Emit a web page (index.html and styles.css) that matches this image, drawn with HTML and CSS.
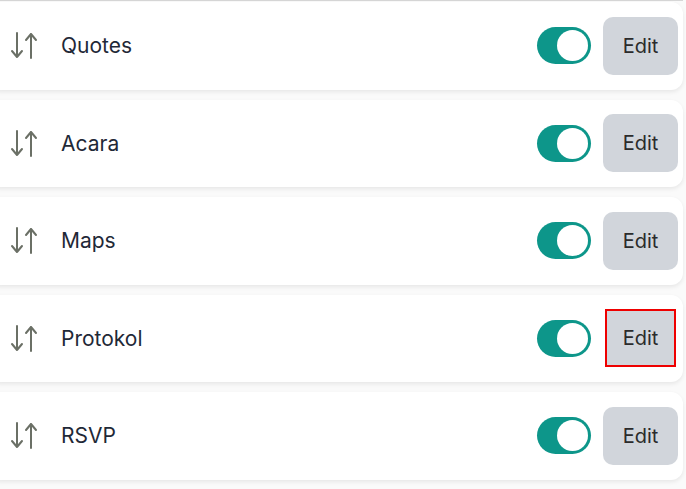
FILE: index.html
```html
<!DOCTYPE html>
<html lang="en">
<head>
    <meta charset="UTF-8">
    <meta name="viewport" content="width=device-width, initial-scale=1.0">
    <title>Sections</title>
    <link rel="stylesheet" href="styles.css">
</head>
<body>

    <div class="section-list">
        <div class="section-card">
            <svg class="sort-icon" viewBox="0 0 28 27" width="28" height="27"><path d="M7 1V25M2 19L7 25L12 19M21 26V2M16 8L21 2L26 8"/></svg>
            <span class="section-name">Quotes</span>
            <label class="toggle"><input type="checkbox" checked><span class="track"></span></label>
            <button class="edit-btn">Edit</button>
        </div>
        <div class="section-card">
            <svg class="sort-icon" viewBox="0 0 28 27" width="28" height="27"><path d="M7 1V25M2 19L7 25L12 19M21 26V2M16 8L21 2L26 8"/></svg>
            <span class="section-name">Acara</span>
            <label class="toggle"><input type="checkbox" checked><span class="track"></span></label>
            <button class="edit-btn">Edit</button>
        </div>
        <div class="section-card">
            <svg class="sort-icon" viewBox="0 0 28 27" width="28" height="27"><path d="M7 1V25M2 19L7 25L12 19M21 26V2M16 8L21 2L26 8"/></svg>
            <span class="section-name">Maps</span>
            <label class="toggle"><input type="checkbox" checked><span class="track"></span></label>
            <button class="edit-btn">Edit</button>
        </div>
        <div class="section-card">
            <svg class="sort-icon" viewBox="0 0 28 27" width="28" height="27"><path d="M7 1V25M2 19L7 25L12 19M21 26V2M16 8L21 2L26 8"/></svg>
            <span class="section-name">Protokol</span>
            <label class="toggle"><input type="checkbox" checked><span class="track"></span></label>
            <button class="edit-btn highlighted">Edit</button>
        </div>
        <div class="section-card">
            <svg class="sort-icon" viewBox="0 0 28 27" width="28" height="27"><path d="M7 1V25M2 19L7 25L12 19M21 26V2M16 8L21 2L26 8"/></svg>
            <span class="section-name">RSVP</span>
            <label class="toggle"><input type="checkbox" checked><span class="track"></span></label>
            <button class="edit-btn">Edit</button>
        </div>
    </div>

</body>
</html>
```

FILE: styles.css
```css
body {
    margin: 0;
    font-family: Inter, "Noto Sans", sans-serif;
    background-color: #fafafa;
}
.section-list {
    border-top: 1px solid #d6d6d6;
    padding-top: 1px;
    margin-left: -12px;
    width: 695px;
}
.section-card {
    display: flex;
    align-items: center;
    height: 87.5px;
    margin-bottom: 10px;
    padding: 0 5px 0 22px;
    box-sizing: border-box;
    background: white;
    border-radius: 12px;
    box-shadow: 0 2px 4px rgba(0, 0, 0, 0.08);
}
.sort-icon {
    fill: none;
    stroke: #6b7066;
    stroke-width: 2;
    stroke-linecap: round;
    stroke-linejoin: round;
}
.section-name {
    flex: 1;
    margin-left: 23px;
    font-size: 21px;
    color: #1f2937;
}
.toggle {
    position: relative;
    display: block;
    width: 54px;
    height: 37px;
    margin-right: 12px;
}
.toggle input {
    display: none;
}
.track {
    display: block;
    width: 100%;
    height: 100%;
    border-radius: 20px;
    background-color: #0d968a;
}
.track::after {
    content: "";
    position: absolute;
    top: 3px;
    right: 3px;
    width: 31px;
    height: 31px;
    border-radius: 50%;
    background: white;
}
.edit-btn {
    width: 75px;
    height: 58px;
    border: none;
    border-radius: 10px;
    background-color: #d1d5db;
    color: #2b2b2b;
    font-family: inherit;
    font-size: 20px;
    cursor: pointer;
}
.edit-btn.highlighted {
    width: 71px;
    margin: 0 2px;
    border: 2px solid #ee0000;
    border-radius: 0;
}
```
